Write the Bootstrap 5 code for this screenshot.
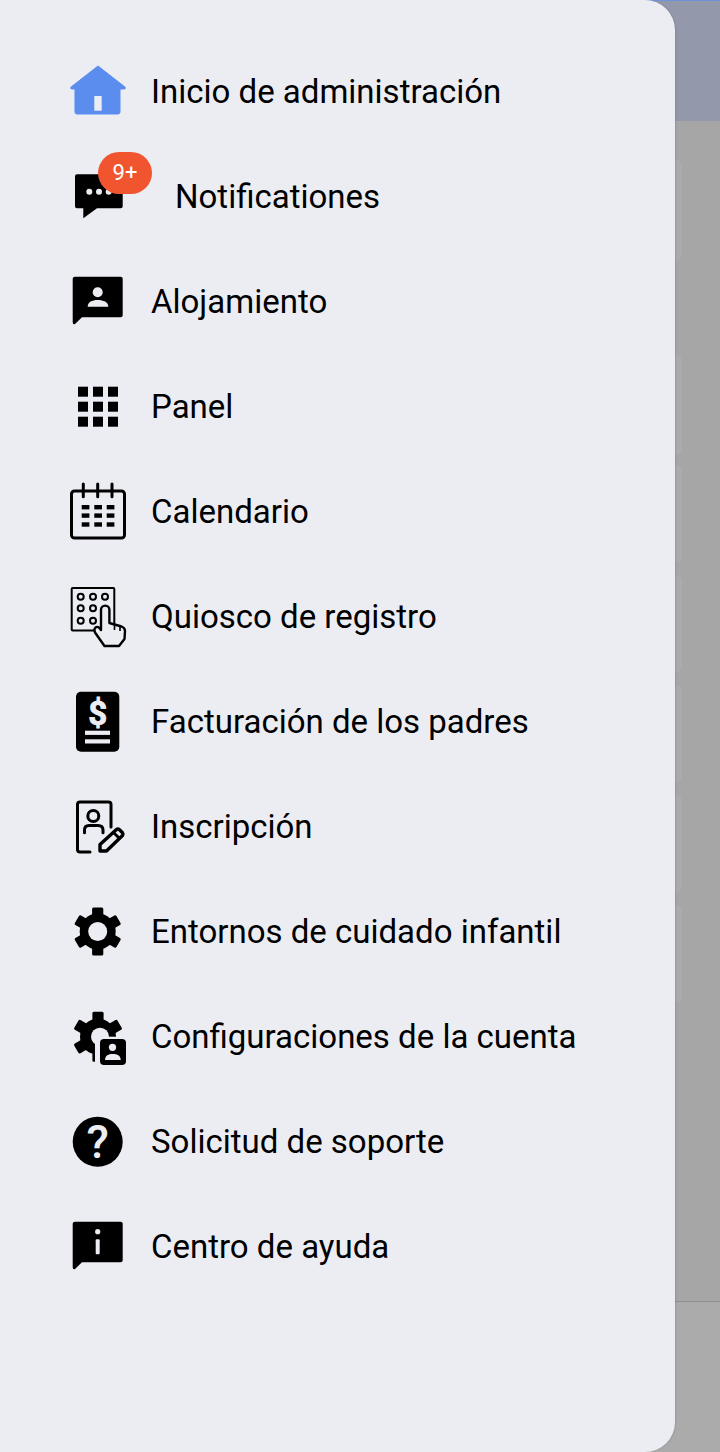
<!DOCTYPE html>
<html lang="es">
<head>
    <meta charset="UTF-8">
    <meta name="viewport" content="width=device-width, initial-scale=1.0">
    <title>Menú</title>
    <link href="https://cdn.jsdelivr.net/npm/bootstrap@5.3.0/dist/css/bootstrap.min.css" rel="stylesheet">
    <style>
        :root {
            --drawer-bg: #ecedf3;
        }

        html, body {
            height: 100%;
        }

        body {
            margin: 0;
            overflow: hidden;
            font-family: Roboto, "Liberation Sans", sans-serif;
            background-color: #a6a6a6;
        }

        /* Pantalla de fondo, oscurecida por el menú */
        .screen {
            height: 1452px;
        }

        .screen-top {
            height: 121px;
            background-color: #9398ab;
            border-top: 1px solid #6f93d8;
        }

        .screen-body {
            height: 1180px;
            padding-top: 39px;
            padding-right: 38px;
        }

        .screen-tile {
            height: 97px;
            margin-bottom: 13px;
            background-color: #ababab;
            border-radius: 6px;
        }

        .screen-tile.tile-first {
            height: 100px;
            margin-bottom: 95px;
        }

        .screen-tile.tile-second {
            height: 100px;
            margin-bottom: 10px;
        }

        .screen-bottom {
            height: 151px;
            background-color: #ababab;
            border-top: 1px solid #8f8f8f;
        }

        /* Menú lateral */
        .drawer {
            position: absolute;
            top: 0;
            left: 0;
            width: 675px;
            height: 1452px;
            padding-top: 39px;
            background-color: var(--drawer-bg);
            border-radius: 0 30px 30px 0;
            box-shadow: 1px 0 2px rgba(0, 0, 0, .1);
        }

        .drawer-item {
            height: 105px;
            padding: 0 0 0 70px;
            gap: 25px;
            font-size: 33px;
            line-height: 1;
            color: #000;
        }

        .drawer-item:hover, .drawer-item:focus {
            color: #000;
        }

        .drawer-icon {
            position: relative;
            flex: 0 0 56px;
            width: 56px;
            height: 56px;
            overflow: visible;
            display: block;
        }

        .drawer-item > .drawer-icon {
            margin-top: -1px;
        }

        .drawer-text-shift {
            margin-left: 24px;
        }

        .notif-count {
            position: absolute;
            top: -16px;
            left: 28px;
            width: 54px;
            height: 42px;
            font-size: 22px;
            font-weight: 400;
            color: #fff;
            background-color: #f0552f;
            border-radius: 21px;
        }

        .icon-label {
            font-family: Roboto, "Liberation Sans", sans-serif;
            font-weight: 700;
        }
    </style>
</head>
<body>

    <div class="screen">
        <div class="screen-top"></div>
        <div class="screen-body">
            <div class="screen-tile tile-first"></div>
            <div class="screen-tile tile-second"></div>
            <div class="screen-tile"></div>
            <div class="screen-tile"></div>
            <div class="screen-tile"></div>
            <div class="screen-tile"></div>
            <div class="screen-tile"></div>
        </div>
        <div class="screen-bottom"></div>
    </div>

    <nav class="drawer nav flex-column flex-nowrap">
        <a class="nav-link drawer-item d-flex align-items-center" href="#">
            <svg class="drawer-icon" viewBox="0 0 56 56">
                <path d="M28 3 L1 24 Q0 26 2 26 H5 V49 Q5 51 7 51 H48 Q50 51 50 49 V26 H54 Q56 26 55 24 Z" fill="#5b8def" stroke="#5b8def" stroke-width="1" stroke-linejoin="round"/>
                <rect x="24.3" y="33" width="7.4" height="14.7" fill="#ecedf3"/>
            </svg>
            <span>Inicio de administración</span>
        </a>
        <a class="nav-link drawer-item d-flex align-items-center" href="#">
            <span class="drawer-icon">
                <svg class="drawer-icon" viewBox="0 0 56 56">
                    <path d="M7 6.3 H50.7 Q52.7 6.3 52.7 8.3 V38.3 Q52.7 40.3 50.7 40.3 H27 L13.3 50.3 V40.3 H7 Q5 40.3 5 38.3 V8.3 Q5 6.3 7 6.3 Z" fill="#000"/>
                    <circle cx="19.3" cy="23.7" r="3" fill="#ecedf3"/>
                    <circle cx="29" cy="23.7" r="3" fill="#ecedf3"/>
                    <circle cx="38.7" cy="23.7" r="3" fill="#ecedf3"/>
                </svg>
                <span class="notif-count d-flex align-items-center justify-content-center">9+</span>
            </span>
            <span class="drawer-text-shift">Notificationes</span>
        </a>
        <a class="nav-link drawer-item d-flex align-items-center" href="#">
            <svg class="drawer-icon" viewBox="0 0 56 56">
                <path d="M5 3.7 H50.7 Q52.7 3.7 52.7 5.7 V42.3 Q52.7 44.3 50.7 44.3 H12 L5 51 Q2.7 52 2.7 49 V5.7 Q2.7 3.7 5 3.7 Z" fill="#000"/>
                <circle cx="27.7" cy="19.3" r="5" fill="#ecedf3"/>
                <path d="M17.7 33.7 C17.7 29 22 27 27.7 27 C33.4 27 38.3 29 38.3 33.7 Z" fill="#ecedf3"/>
            </svg>
            <span>Alojamiento</span>
        </a>
        <a class="nav-link drawer-item d-flex align-items-center" href="#">
            <svg class="drawer-icon" viewBox="0 0 56 56">
                <g fill="#000">
                    <rect x="8" y="8.7" width="10" height="10"/><rect x="23" y="8.7" width="10" height="10"/><rect x="38" y="8.7" width="10" height="10"/>
                    <rect x="8" y="23.7" width="10" height="10"/><rect x="23" y="23.7" width="10" height="10"/><rect x="38" y="23.7" width="10" height="10"/>
                    <rect x="8" y="38.7" width="10" height="10"/><rect x="23" y="38.7" width="10" height="10"/><rect x="38" y="38.7" width="10" height="10"/>
                </g>
            </svg>
            <span>Panel</span>
        </a>
        <a class="nav-link drawer-item d-flex align-items-center" href="#">
            <svg class="drawer-icon" viewBox="0 0 56 56">
                <rect x="1.5" y="8" width="53" height="47" rx="3" fill="none" stroke="#000" stroke-width="3"/>
                <path d="M13.3 1 V13.7 M27.7 1 V13.7 M42 1 V13.7" stroke="#000" stroke-width="3" stroke-linecap="round"/>
                <g fill="#000">
                    <rect x="11.7" y="22" width="7.7" height="4.4"/><rect x="24.3" y="22" width="7.7" height="4.4"/><rect x="36.7" y="22" width="7.7" height="4.4"/>
                    <rect x="11.7" y="30.4" width="7.7" height="4.4"/><rect x="24.3" y="30.4" width="7.7" height="4.4"/><rect x="36.7" y="30.4" width="7.7" height="4.4"/>
                    <rect x="11.7" y="39.3" width="7.7" height="4.4"/><rect x="24.3" y="39.3" width="7.7" height="4.4"/><rect x="36.7" y="39.3" width="7.7" height="4.4"/>
                </g>
            </svg>
            <span>Calendario</span>
        </a>
        <a class="nav-link drawer-item d-flex align-items-center" href="#">
            <svg class="drawer-icon" viewBox="0 0 56 56">
                <rect x="1.7" y="0" width="42.6" height="42.6" rx="1" fill="none" stroke="#000" stroke-width="2"/>
                <g fill="none" stroke="#000" stroke-width="2">
                    <circle cx="10.7" cy="8.7" r="3"/><circle cx="23" cy="8.7" r="3"/><circle cx="35" cy="8.7" r="3"/>
                    <circle cx="10.7" cy="20.3" r="3"/><circle cx="23" cy="20.3" r="3"/>
                    <circle cx="10.7" cy="32.7" r="3"/><circle cx="23" cy="32.7" r="3"/>
                </g>
                <path d="M31 42 V21.8 A4.2 4.2 0 0 1 39.4 21.8 V35 L51.5 38.5 Q55 39.8 55 43 L54.5 51 L49 58 H34.5 L25 44.5 Q23.5 41.5 25.5 39.5 Q28 37.5 31 42 Z" fill="#ecedf3" stroke="#000" stroke-width="2.4" stroke-linejoin="round"/>
                <path d="M44.5 37 V42 M50 38.5 V43" stroke="#000" stroke-width="1.6" fill="none"/>
            </svg>
            <span>Quiosco de registro</span>
        </a>
        <a class="nav-link drawer-item d-flex align-items-center" href="#">
            <svg class="drawer-icon" viewBox="0 0 56 56">
                <rect x="6" y="-1.3" width="43.3" height="60" rx="5" fill="#000"/>
                <text class="icon-label" x="27.7" y="31.5" font-size="33" text-anchor="middle" fill="#ecedf3" stroke="#ecedf3" stroke-width="0.8">$</text>
                <rect x="15" y="37.7" width="25" height="4.2" fill="#ecedf3"/>
                <rect x="15" y="46.3" width="25" height="4.2" fill="#ecedf3"/>
            </svg>
            <span>Facturación de los padres</span>
        </a>
        <a class="nav-link drawer-item d-flex align-items-center" href="#">
            <svg class="drawer-icon" viewBox="0 0 56 56">
                <path d="M20 54 H10 Q7.5 54 7.5 51.5 V6.5 Q7.5 4 10 4 H38.5 Q41 4 41 6.5 V29" fill="none" stroke="#000" stroke-width="3" stroke-linecap="round"/>
                <circle cx="23.3" cy="18" r="5.5" fill="none" stroke="#000" stroke-width="3"/>
                <path d="M14.5 34.7 V32 Q14.5 27.5 19 27.5 H28 Q33 27.5 33 32 V34.7" fill="none" stroke="#000" stroke-width="3" stroke-linecap="round"/>
                <path d="M30 53 V46.5 L46.5 31.5 Q48 30.5 49.5 31.8 L52.5 34.8 Q53.5 36 52.5 37.5 L36.5 53 Z" fill="none" stroke="#000" stroke-width="3.4" stroke-linejoin="round"/>
                <path d="M43 34 L50 41" stroke="#000" stroke-width="3"/>
            </svg>
            <span>Inscripción</span>
        </a>
        <a class="nav-link drawer-item d-flex align-items-center" href="#">
            <svg class="drawer-icon" viewBox="0 0 56 56">
                <g fill="#000" transform="translate(27.7 28.5)">
                    <circle r="18"/>
                    <rect x="-5.6" y="-24" width="11.2" height="48" rx="1.5"/>
                    <rect x="-5.6" y="-24" width="11.2" height="48" rx="1.5" transform="rotate(60)"/>
                    <rect x="-5.6" y="-24" width="11.2" height="48" rx="1.5" transform="rotate(120)"/>
                    <circle r="9.5" fill="#ecedf3"/>
                </g>
            </svg>
            <span>Entornos de cuidado infantil</span>
        </a>
        <a class="nav-link drawer-item d-flex align-items-center" href="#">
            <svg class="drawer-icon" viewBox="0 0 56 56">
                <g fill="#000" transform="translate(28 28.7)">
                    <circle r="18"/>
                    <rect x="-5.6" y="-25" width="11.2" height="50" rx="1.5"/>
                    <rect x="-5.6" y="-25" width="11.2" height="50" rx="1.5" transform="rotate(60)"/>
                    <rect x="-5.6" y="-25" width="11.2" height="50" rx="1.5" transform="rotate(120)"/>
                </g>
                <circle cx="30" cy="28.7" r="9" fill="#ecedf3"/>
                <rect x="25" y="28.7" width="32" height="30" fill="#ecedf3"/>
                <rect x="30" y="31" width="26" height="26" rx="4" fill="#000"/>
                <circle cx="42.5" cy="39.3" r="3.6" fill="#ecedf3"/>
                <path d="M35 52 C35 47.5 38.5 46 42.8 46 C47 46 50.7 47.5 50.7 52 Z" fill="#ecedf3"/>
            </svg>
            <span>Configuraciones de la cuenta</span>
        </a>
        <a class="nav-link drawer-item d-flex align-items-center" href="#">
            <svg class="drawer-icon" viewBox="0 0 56 56">
                <circle cx="27.7" cy="28.7" r="25" fill="#000"/>
                <text x="27.7" y="45" font-size="46" font-family="Roboto, sans-serif" font-weight="500" text-anchor="middle" fill="#ecedf3">?</text>
            </svg>
            <span>Solicitud de soporte</span>
        </a>
        <a class="nav-link drawer-item d-flex align-items-center" href="#">
            <svg class="drawer-icon" viewBox="0 0 56 56">
                <path d="M5 3.7 H50.7 Q52.7 3.7 52.7 5.7 V42.3 Q52.7 44.3 50.7 44.3 H12 L5 51 Q2.7 52 2.7 49 V5.7 Q2.7 3.7 5 3.7 Z" fill="#000"/>
                <circle cx="27.7" cy="13.7" r="2.6" fill="#ecedf3"/>
                <rect x="25.7" y="21.3" width="4" height="15" rx="1" fill="#ecedf3"/>
            </svg>
            <span>Centro de ayuda</span>
        </a>
    </nav>

    <script src="https://cdn.jsdelivr.net/npm/bootstrap@5.3.0/dist/js/bootstrap.bundle.min.js"></script>
</body>
</html>
